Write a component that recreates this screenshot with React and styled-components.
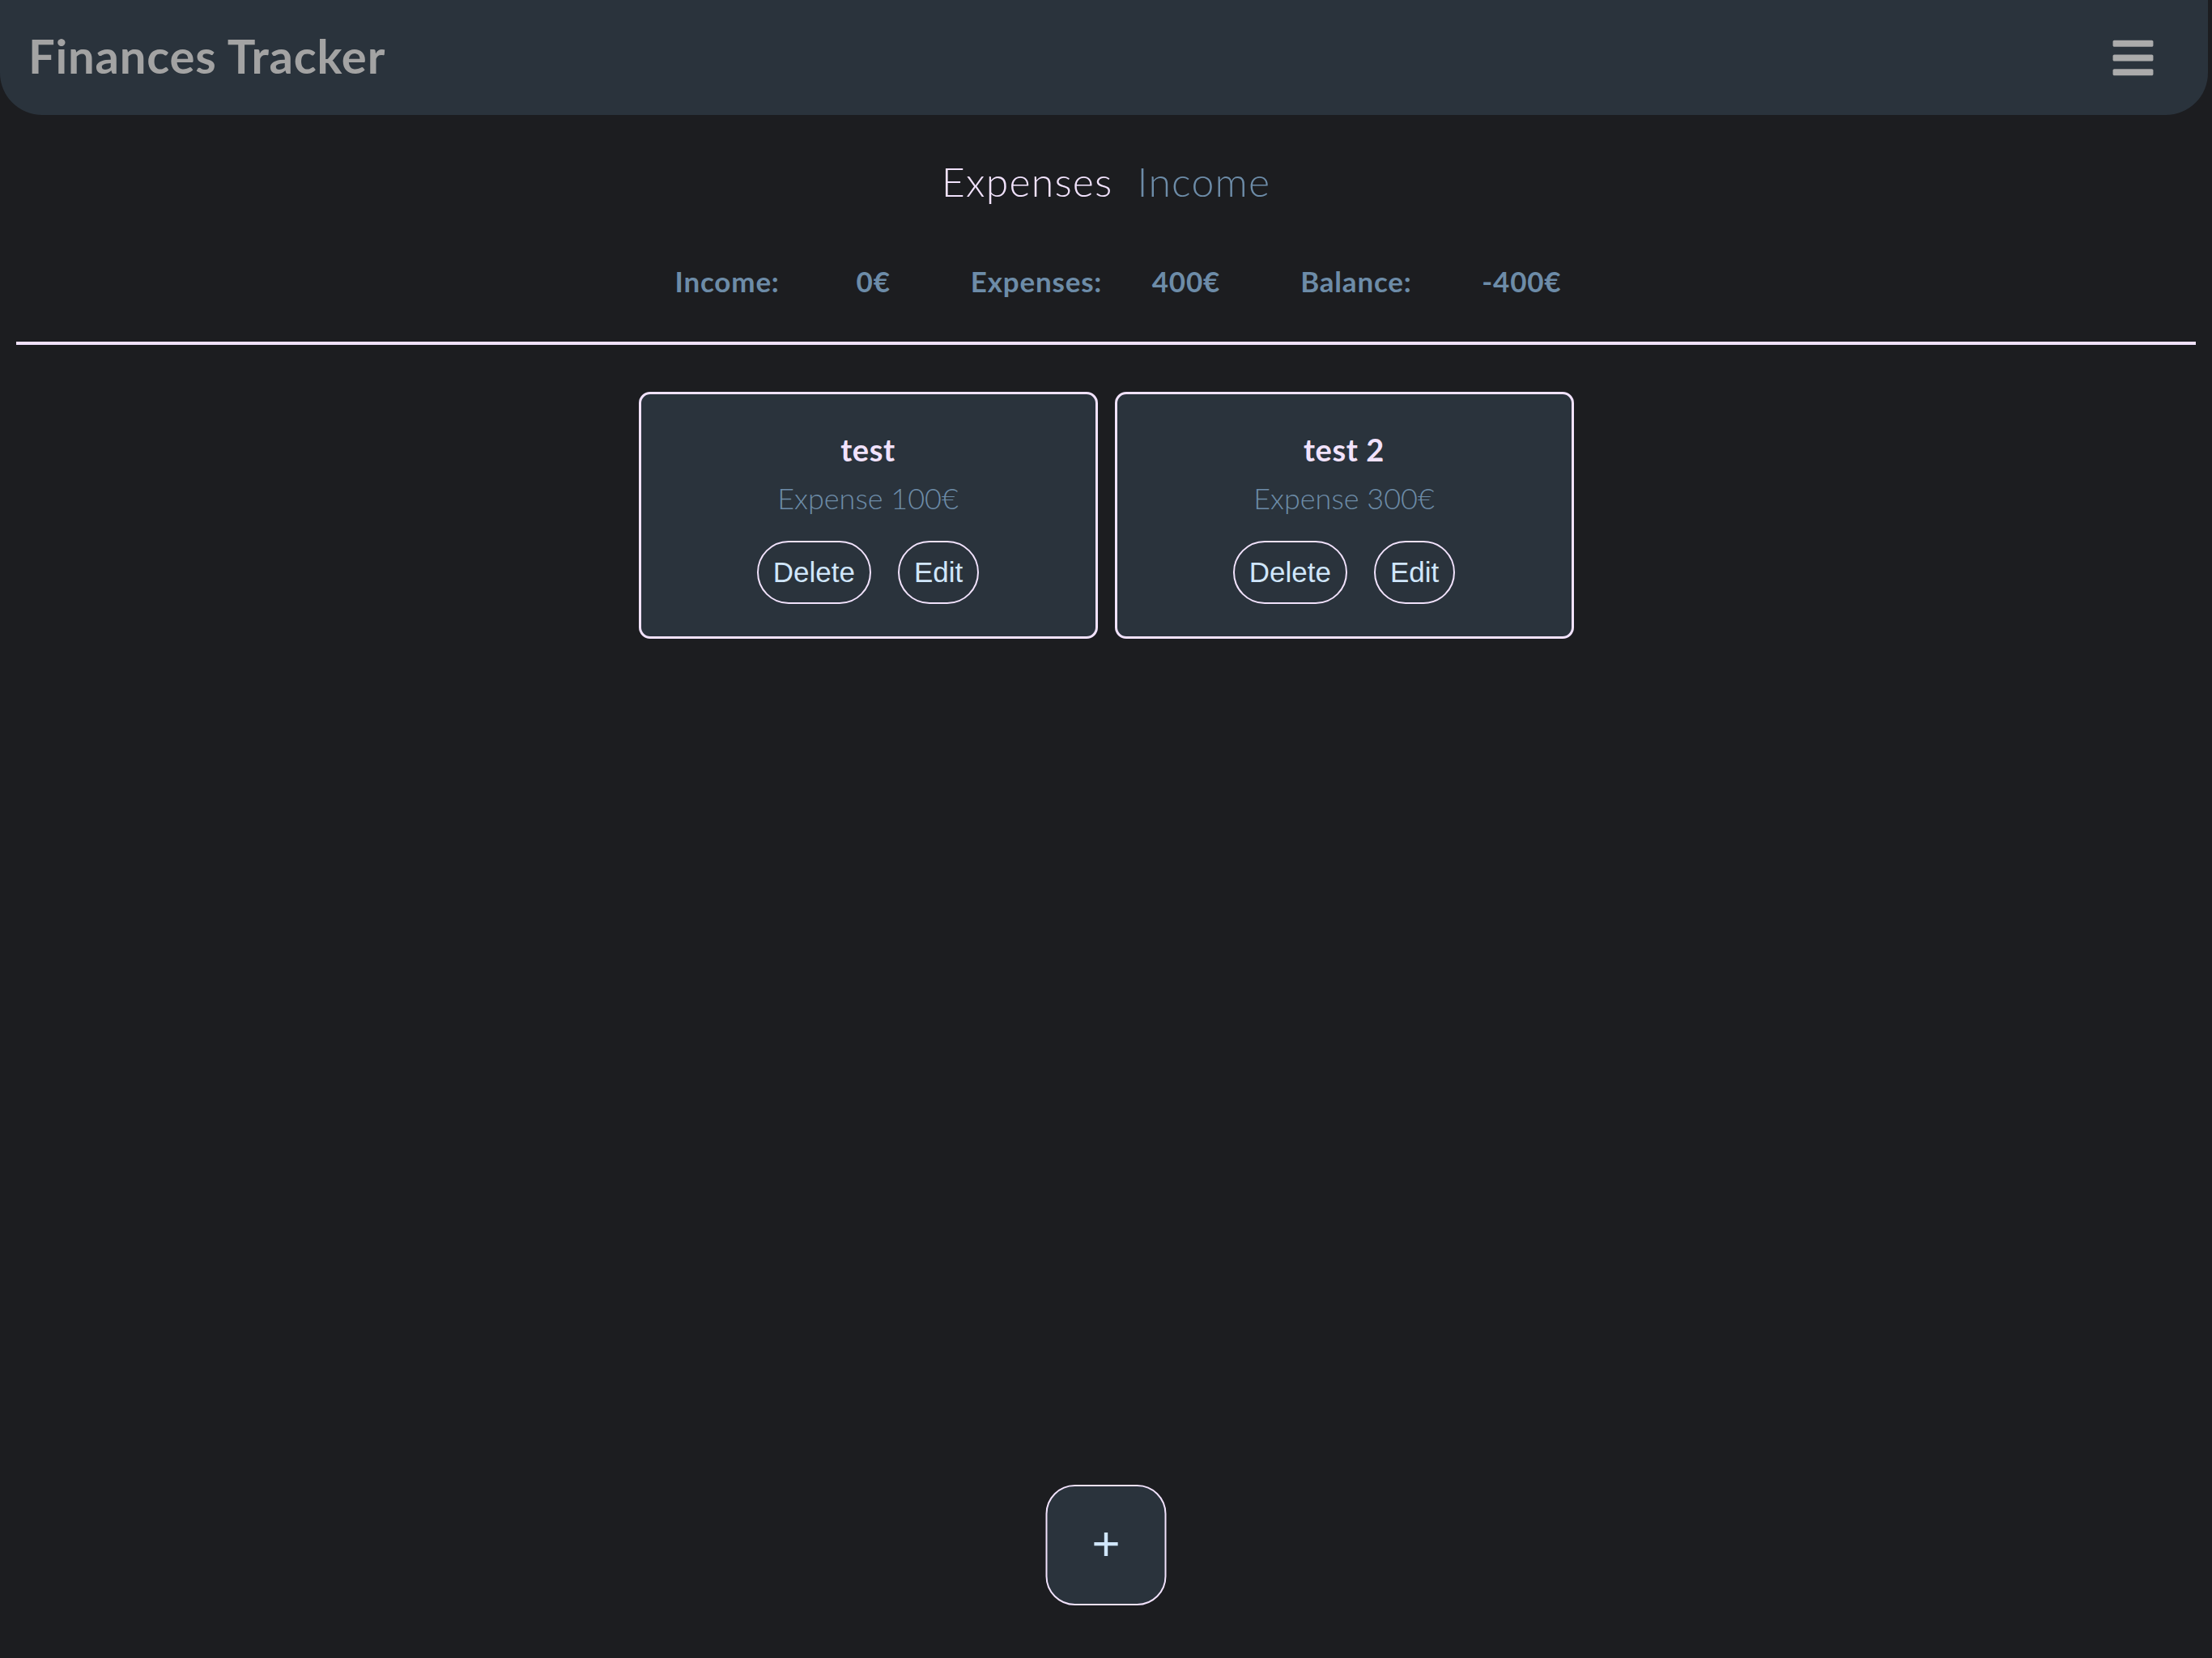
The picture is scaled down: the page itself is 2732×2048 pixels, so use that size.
import React from "react";
import styled, { createGlobalStyle } from "styled-components";
import { FaBars } from "react-icons/fa";

const GlobalStyle = createGlobalStyle`
  html, body {
    margin: 0;
    padding: 0;
    background-color: #1c1d20;
  }

  body {
    font-family: "Lato", "Noto Sans", sans-serif;
    min-height: 100vh;
  }
`;

const Page = styled.div`
  min-height: 100vh;
  background-color: #1c1d20;
`;

const Header = styled.header`
  box-sizing: border-box;
  width: calc(100% - 5px);
  height: 142px;
  padding: 0 64px 0 35px;
  display: flex;
  align-items: center;
  justify-content: space-between;
  background-color: #2a333c;
  border-radius: 0 0 52px 52px;

  h1 {
    margin: 0 0 6px;
    font-size: 58px;
    font-weight: 700;
    color: #a3a3a3;
    letter-spacing: 0.8px;
  }
`;

const MenuButton = styled.div`
  display: flex;
  color: #ababab;
  cursor: pointer;
`;

const Tabs = styled.nav`
  display: flex;
  justify-content: center;
  gap: 30px;
  margin-top: 52px;
`;

const Tab = styled.span`
  font-size: 50px;
  font-weight: 300;
  line-height: 1.2;
  letter-spacing: 1.2px;
  color: ${({ active }) => (active ? "#f1e2fc" : "#6d8ca8")};
  cursor: pointer;
`;

const Summary = styled.div`
  display: flex;
  justify-content: center;
  gap: 99px;
  margin-top: 72px;
  padding-left: 30px;
  font-size: 35px;
  font-weight: 700;
  line-height: 1.2;
  letter-spacing: 0.8px;
  color: #6d8ca8;
`;

const Stat = styled.div`
  display: flex;

  .label {
    min-width: 224px;
  }
`;

const Divider = styled.hr`
  margin: 54px 20px 0;
  border: none;
  height: 4px;
  background-color: #f1e2fc;
`;

const CardList = styled.div`
  display: flex;
  justify-content: center;
  gap: 21px;
  margin-top: 58px;
`;

const Card = styled.div`
  box-sizing: border-box;
  width: 567px;
  padding: 46px 20px 40px;
  display: flex;
  flex-direction: column;
  align-items: center;
  background-color: #2a333c;
  border: 3px solid #f1e2fc;
  border-radius: 14px;

  h3 {
    margin: 0;
    font-size: 38px;
    font-weight: 700;
    line-height: 1.2;
    letter-spacing: 0.6px;
    color: #f1e2fc;
  }

  p {
    margin: 15px 0 0;
    font-size: 36px;
    font-weight: 300;
    line-height: 1.2;
    color: #6d8ca8;
  }
`;

const Actions = styled.div`
  display: flex;
  gap: 33px;
  margin-top: 31px;
`;

const PillButton = styled.button`
  padding: 17px 18px;
  font-family: "Liberation Sans", Arial, sans-serif;
  font-size: 35px;
  line-height: 40px;
  color: #d0e6fb;
  background-color: transparent;
  border: 2px solid #f1e2fc;
  border-radius: 40px;
  cursor: pointer;
`;

const AddButton = styled.button`
  position: fixed;
  left: 50%;
  bottom: 65px;
  transform: translateX(-50%);
  width: 149px;
  height: 149px;
  display: flex;
  align-items: center;
  justify-content: center;
  padding: 0 0 4px;
  font-family: "Liberation Sans", Arial, sans-serif;
  font-size: 60px;
  color: #d0e6fb;
  background-color: #2a333c;
  border: 2px solid #f1e2fc;
  border-radius: 36px;
  cursor: pointer;
`;

const entries = [
  { id: 1, title: "test", type: "Expense", amount: 100 },
  { id: 2, title: "test 2", type: "Expense", amount: 300 }
];

const App = () => {
  const expenses = entries.reduce((sum, e) => sum + e.amount, 0);
  const income = 0;

  return (
    <Page>
      <GlobalStyle />
      <Header>
        <h1>Finances Tracker</h1>
        <MenuButton>
          <FaBars size={57} />
        </MenuButton>
      </Header>

      <Tabs>
        <Tab active>Expenses</Tab>
        <Tab>Income</Tab>
      </Tabs>

      <Summary>
        <Stat>
          <span className="label">Income:</span>
          <span>{income}€</span>
        </Stat>
        <Stat>
          <span className="label">Expenses:</span>
          <span>{expenses}€</span>
        </Stat>
        <Stat>
          <span className="label">Balance:</span>
          <span>{income - expenses}€</span>
        </Stat>
      </Summary>

      <Divider />

      <CardList>
        {entries.map(entry => (
          <Card key={entry.id}>
            <h3>{entry.title}</h3>
            <p>
              {entry.type} {entry.amount}€
            </p>
            <Actions>
              <PillButton>Delete</PillButton>
              <PillButton>Edit</PillButton>
            </Actions>
          </Card>
        ))}
      </CardList>

      <AddButton>+</AddButton>
    </Page>
  );
};

export default App;
